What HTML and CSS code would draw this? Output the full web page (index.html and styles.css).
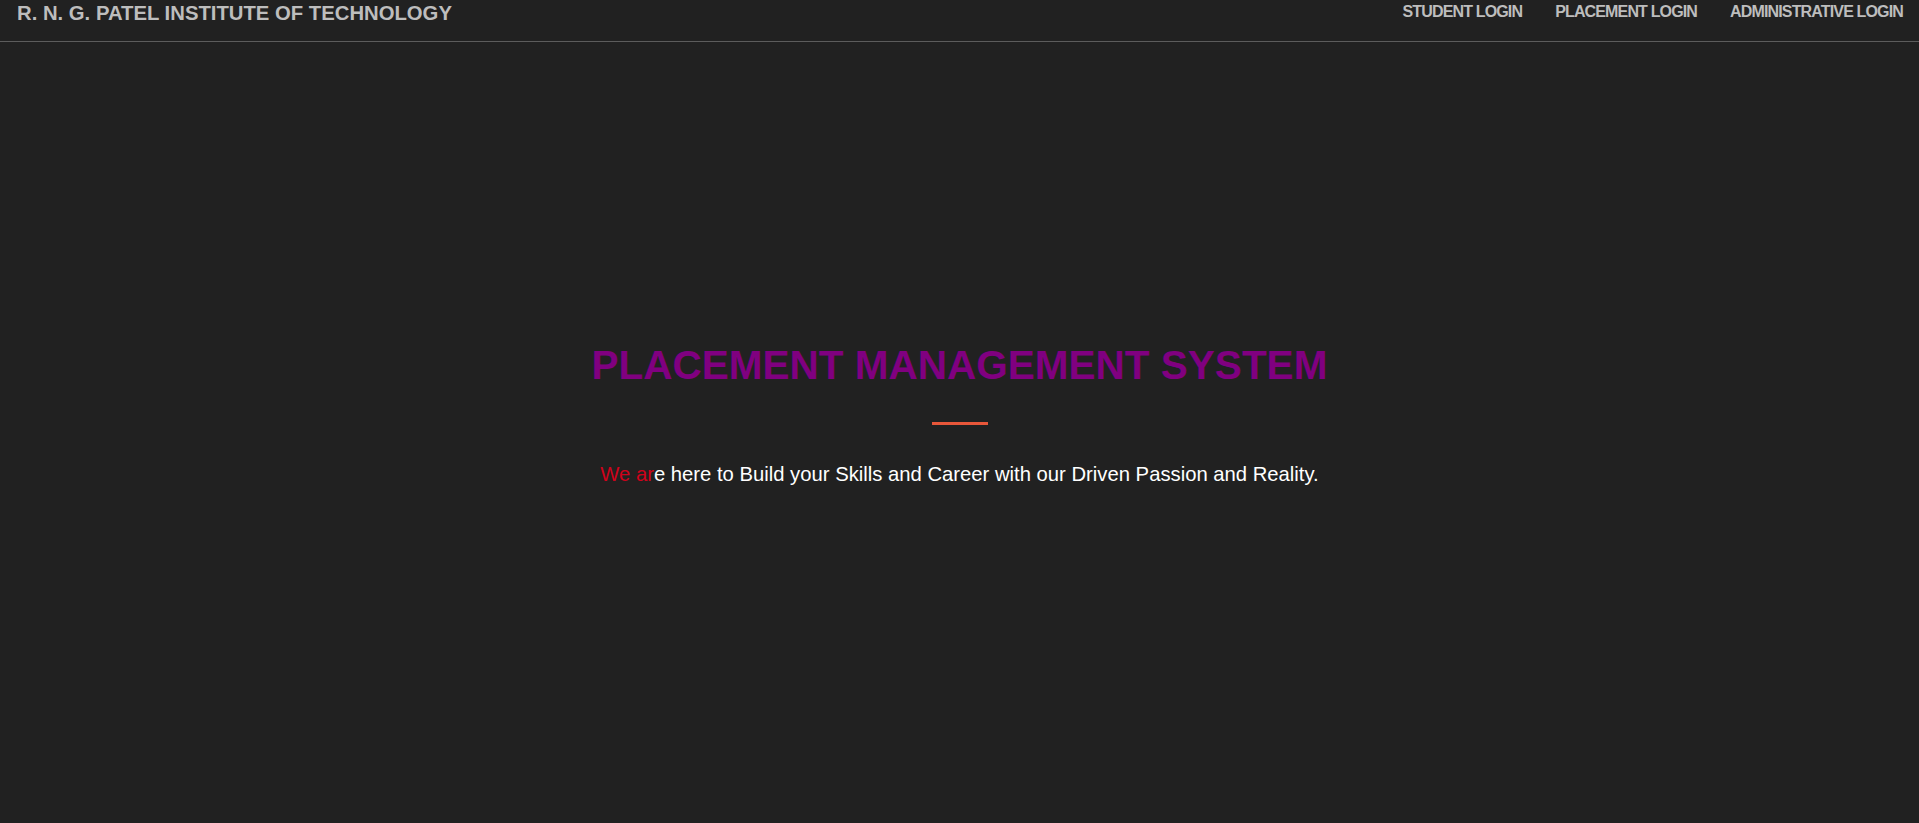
FILE: index.html
```html
<!DOCTYPE html>
<html lang="en">
<head>
<meta charset="utf-8">
<title>Placement Management System</title>
<link rel="stylesheet" href="styles.css">
</head>
<body>
<header class="topbar">
  <div class="brand">R. N. G. PATEL INSTITUTE OF TECHNOLOGY</div>
  <nav class="nav">
    <a class="nav-link" href="#">STUDENT LOGIN</a>
    <a class="nav-link" href="#">PLACEMENT LOGIN</a>
    <a class="nav-link" href="#">ADMINISTRATIVE LOGIN</a>
  </nav>
</header>
<main class="hero">
  <h1 class="hero-title">PLACEMENT MANAGEMENT SYSTEM</h1>
  <div class="hero-rule"></div>
  <p class="hero-text"><span class="typed">We ar</span>e here to Build your Skills and Career with our Driven Passion and Reality.</p>
</main>
</body>
</html>
```
FILE: styles.css
```css
html, body {
  margin: 0;
  padding: 0;
  background: #212121;
  font-family: "Liberation Sans", Arial, sans-serif;
}
body {
  min-height: 823px;
}
.topbar {
  display: flex;
  justify-content: space-between;
  align-items: flex-start;
  height: 41px;
  padding: 0 16px 0 17px;
  border-bottom: 1px solid #5c5c5c;
}
.brand {
  font-size: 20.3px;
  font-weight: 700;
  line-height: 26px;
  color: #bdbdbd;
}
.nav {
  display: flex;
  gap: 33px;
}
.nav-link {
  font-size: 16px;
  font-weight: 700;
  letter-spacing: -0.85px;
  line-height: 24px;
  color: #bdbdbd;
  text-decoration: none;
}
.hero {
  display: flex;
  flex-direction: column;
  align-items: center;
  padding-top: 299px;
  text-align: center;
}
.hero-title {
  margin: 0;
  font-size: 40.5px;
  line-height: 48px;
  font-weight: 700;
  color: #800080;
}
.hero-rule {
  width: 56px;
  height: 3px;
  margin-top: 33px;
  background: #e8573a;
}
.hero-text {
  margin: 37px 0 0;
  font-size: 20.25px;
  line-height: 24px;
  color: #ffffff;
}
.typed {
  color: #d0021b;
}
```
